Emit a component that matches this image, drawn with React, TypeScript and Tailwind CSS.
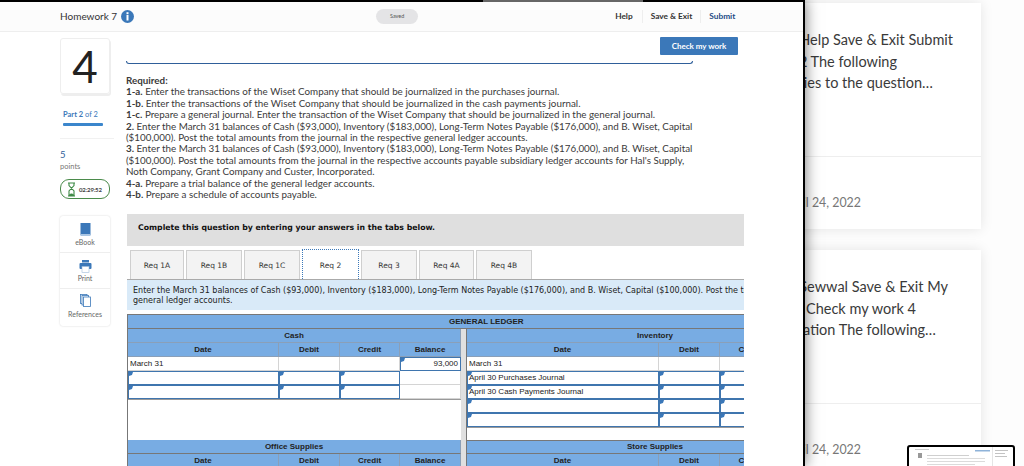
import { ReactNode } from 'react';

const tabs = [
  { label: 'Req 1A', width: 'w-[54px]' },
  { label: 'Req 1B', width: 'w-[56px]' },
  { label: 'Req 1C', width: 'w-[56px]' },
  { label: 'Req 2', width: 'w-[57px]' },
  { label: 'Req 3', width: 'w-[56px]' },
  { label: 'Req 4A', width: 'w-[55px]' },
  { label: 'Req 4B', width: 'w-[56px]' },
];

function Corner() {
  return <span className="absolute left-0 top-0 h-0 w-0 border-l-[3px] border-t-[3px] border-b-[1px] border-r-[1px] border-b-transparent border-r-transparent border-l-[#3b78b9] border-t-[#3b78b9]" />;
}

function Head({ children, strong }: { children?: ReactNode; strong?: boolean }) {
  return (
    <div className={`flex h-[14px] items-center justify-center border-b border-r border-[#8a9fb8] bg-[#78ace3] text-[8px] font-bold text-[#222] ${strong ? 'border-b-[#777]' : ''}`}>
      {children}
    </div>
  );
}

function Input({ children }: { children?: ReactNode }) {
  return (
    <div className="relative flex h-[14px] items-center border border-[#3f75ae] bg-white pl-[1px] text-[8px] text-[#222]">
      <Corner />
      {children}
    </div>
  );
}

function Plain({ children, right }: { children?: ReactNode; right?: boolean }) {
  return (
    <div className={`flex h-[14px] items-center border-b border-r border-[#d4d4d4] bg-white px-[2px] text-[8px] text-[#222] ${right ? 'justify-end' : ''}`}>
      {children}
    </div>
  );
}

function LeftLedger() {
  const cols = 'grid grid-cols-[151px_61px_60px_61px]';
  return (
    <div className="w-[333px] shrink-0">
      <Head>Cash</Head>
      <div className={cols}>
        <Head>Date</Head>
        <Head>Debit</Head>
        <Head>Credit</Head>
        <Head>Balance</Head>
      </div>
      <div className={cols}>
        <Plain>March 31</Plain>
        <Plain />
        <Plain />
        <Input>
          <span className="w-full pr-[2px] text-right">93,000</span>
        </Input>
      </div>
      <div className={cols}>
        <Input />
        <Input />
        <Input />
        <Plain />
      </div>
      <div className={cols}>
        <Input />
        <Input />
        <Input />
        <Plain />
      </div>
      <div className="h-[41px] border-t border-[#999] bg-white" />
      <Head strong>Office Supplies</Head>
      <div className={cols}>
        <Head>Date</Head>
        <Head>Debit</Head>
        <Head>Credit</Head>
        <Head>Balance</Head>
      </div>
    </div>
  );
}

function RightLedger() {
  const cols = 'grid grid-cols-[192px_61px_61px]';
  return (
    <div className="w-[315px] shrink-0 border-l border-[#777]">
      <div className="flex h-[14px] items-center border-b border-[#8a9fb8] bg-[#78ace3] pl-[170px] text-[8px] font-bold text-[#222]">Inventory</div>
      <div className={cols}>
        <Head>Date</Head>
        <Head>Debit</Head>
        <Head>Credit</Head>
      </div>
      <div className={cols}>
        <Plain>March 31</Plain>
        <Plain />
        <Plain />
      </div>
      {['April 30 Purchases Journal', 'April 30 Cash Payments Journal', '', ''].map((label, i) => (
        <div key={i} className={cols}>
          <Input>{label}</Input>
          <Input />
          <Input />
        </div>
      ))}
      <div className="h-[13px] border-t border-[#999] bg-white" />
      <div className="flex h-[14px] items-center border-y border-[#777] bg-[#78ace3] pl-[160px] text-[8px] font-bold text-[#222]">Store Supplies</div>
      <div className={cols}>
        <Head>Date</Head>
        <Head>Debit</Head>
        <Head>Credit</Head>
      </div>
    </div>
  );
}

function Rail() {
  return (
    <div className="flex w-[50px] shrink-0 flex-col pt-[6px]">
      <div className="flex h-[56px] items-center justify-center rounded-[3px] border border-[#eeeeee] text-[44px] leading-none text-[#222] shadow-[1px_2px_0_#eeeeee]">4</div>
      <div className="mt-[16px] pl-[3px] text-[7.5px] leading-[10px] text-[#3b78b9]">
        <span className="font-bold">Part 2</span> of 2
      </div>
      <div className="ml-[3px] mt-[3px] h-[3px] w-[40px] rounded-[1px] bg-[#3b86cc]" />
      <div className="mt-[12px] h-px w-[54px] bg-[#f1f1f1]" />
      <div className="mt-[10px] text-[9.5px] leading-[12px] text-[#2f5f9a]">5</div>
      <div className="text-[7.5px] leading-[11px] text-[#777]">points</div>
      <div className="mt-[7px] flex h-[20px] items-center gap-[3px] rounded-[9px] border border-[#4b8b4b] pl-[6px]">
        <svg width="9" height="15" viewBox="0 0 9 15" fill="none" stroke="#3f8a46" strokeWidth="1.1">
          <path d="M1 1h7M1 14h7M2 1v2.5L7 9v5M7 1v2.5L2 9v5" />
          <path d="M2.5 13.5c0-2 4-2 4 0z" fill="#3f8a46" />
        </svg>
        <span className="text-[6px] font-bold tracking-tight text-[#444]">02:29:52</span>
      </div>
      <div className="mt-[17px] flex w-[50px] flex-col rounded-[3px] shadow-[0_0_2px_rgba(0,0,0,0.18)]">
        <div className="flex h-[37px] flex-col items-center justify-end border-b border-[#eeeeee] pb-[5px]">
          <svg width="11" height="13" viewBox="0 0 11 13">
            <rect x="0.5" y="0" width="10" height="12" fill="#3b78b9" />
            <rect x="0.5" y="11" width="10" height="2" fill="#a9c6e4" />
          </svg>
          <span className="mt-[2px] text-[7px] leading-[9px] text-[#666]">eBook</span>
        </div>
        <div className="flex h-[36px] flex-col items-center justify-end border-b border-[#eeeeee] pb-[5px]">
          <svg width="13" height="13" viewBox="0 0 13 13">
            <rect x="3" y="0" width="7" height="2.5" fill="#3b78b9" />
            <rect x="0.5" y="3" width="12" height="6" rx="1" fill="#3b78b9" />
            <rect x="3" y="6.5" width="7" height="6" fill="#fff" stroke="#9dbbdb" strokeWidth="0.6" />
          </svg>
          <span className="mt-[1px] text-[7px] leading-[9px] text-[#666]">Print</span>
        </div>
        <div className="flex h-[37px] flex-col items-center justify-end pb-[7px]">
          <svg width="11" height="13" viewBox="0 0 11 13" fill="#fff" stroke="#3b78b9" strokeWidth="0.8">
            <rect x="0.5" y="0.5" width="6.5" height="9" />
            <rect x="2" y="1.5" width="6.5" height="9.5" />
            <rect x="3.5" y="3" width="7" height="9.5" />
          </svg>
          <span className="mt-[3px] text-[7px] leading-[9px] text-[#666]">References</span>
        </div>
      </div>
    </div>
  );
}

function Instructions() {
  return (
    <div className="mt-[11px] whitespace-nowrap text-[9.82px] leading-[11.4px] text-[#3a3a3a]">
      <div className="font-bold">Required:</div>
      <div><b>1-a.</b> Enter the transactions of the Wiset Company that should be journalized in the purchases journal.</div>
      <div><b>1-b.</b> Enter the transactions of the Wiset Company that should be journalized in the cash payments journal.</div>
      <div><b>1-c.</b> Prepare a general journal. Enter the transaction of the Wiset Company that should be journalized in the general journal.</div>
      <div>
        <b>2.</b> Enter the March 31 balances of Cash ($93,000), Inventory ($183,000), Long-Term Notes Payable ($176,000), and B. Wiset, Capital
        <br />
        ($100,000). Post the total amounts from the journal in the respective general ledger accounts.
      </div>
      <div>
        <b>3.</b> Enter the March 31 balances of Cash ($93,000), Inventory ($183,000), Long-Term Notes Payable ($176,000), and B. Wiset, Capital
        <br />
        ($100,000). Post the total amounts from the journal in the respective accounts payable subsidiary ledger accounts for Hal's Supply,
        <br />
        Noth Company, Grant Company and Custer, Incorporated.
      </div>
      <div><b>4-a.</b> Prepare a trial balance of the general ledger accounts.</div>
      <div><b>4-b.</b> Prepare a schedule of accounts payable.</div>
    </div>
  );
}

function Worksheet() {
  return (
    <div className="mt-[14px] ml-[1px] w-[617px] overflow-hidden font-['DejaVu_Sans',sans-serif]">
      <div className="flex h-[32px] items-center bg-[#dfdfdf] pb-[5px] pl-[11px] text-[7.75px] font-bold text-[#111]">
        Complete this question by entering your answers in the tabs below.
      </div>
      <div className="flex h-[34px] items-end gap-[2px] border-b border-[#aaaaaa] pl-[3px]">
        {tabs.map((t) =>
          t.label === 'Req 2' ? (
            <div key={t.label} className={`flex h-[30px] items-center justify-center border-x border-t border-dotted border-[#3b78b9] bg-white pt-[1px] text-[7.5px] text-[#333] ${t.width}`}>
              {t.label}
            </div>
          ) : (
            <div key={t.label} className={`flex h-[29px] items-center justify-center border-x border-t border-[#cfcfcf] bg-[#f3f3f3] text-[7.5px] text-[#333] ${t.width}`}>
              {t.label}
            </div>
          ),
        )}
      </div>
      <div className="flex h-[30px] items-center overflow-hidden whitespace-nowrap bg-[#d9eaf8] pl-[6px] pt-[1px] text-[8px] leading-[10px] text-[#222]">
        <div>
          Enter the March 31 balances of Cash ($93,000), Inventory ($183,000), Long-Term Notes Payable ($176,000), and B. Wiset, Capital ($100,000). Post the total
          <br />
          general ledger accounts.
        </div>
      </div>
      <div className="mt-[4px] h-[152px] overflow-hidden border-l border-t border-[#777] font-['Liberation_Sans',sans-serif]">
        <div className="flex h-[14px] items-center border-b border-[#777] bg-[#78ace3] pl-[321px] text-[8px] font-bold text-[#222]">GENERAL LEDGER</div>
        <div className="flex w-[660px]">
          <LeftLedger />
          <div className="w-[5px] shrink-0 bg-[#e0e0e0]" />
          <RightLedger />
        </div>
      </div>
    </div>
  );
}

function MainWindow() {
  return (
    <div className="absolute left-0 top-0 h-[466px] w-[805px] border-r-[2px] border-t-[2px] border-black bg-white font-['Lato',sans-serif] shadow-[0_0_14px_rgba(0,0,0,0.55)]">
      <div className="absolute left-[483px] top-[-2px] h-[2px] w-[160px] bg-[#666]" />
      <div className="relative flex h-[30px] items-center border-b border-[#eeeeee] bg-[#fcfcfc] pl-[60px]">
        <span className="text-[10px] text-[#333]">Homework 7</span>
        <svg className="ml-[4px]" width="13" height="13" viewBox="0 0 13 13">
          <circle cx="6.5" cy="6.5" r="6.5" fill="#3b78b9" />
          <rect x="5.5" y="2.2" width="2" height="2" fill="#fff" />
          <rect x="5.5" y="5" width="2" height="5.5" fill="#fff" />
        </svg>
        <div className="ml-[242px] flex h-[15px] w-[42px] items-center justify-center rounded-full bg-[#e4e4e6] text-[5.5px] text-[#555]">Saved</div>
        <div className="ml-[197px] flex items-center text-[8.3px] font-bold text-[#333]">
          <span className="pr-[9px]">Help</span>
          <span className="border-l border-[#eeeeee] px-[8px]">Save &amp; Exit</span>
          <span className="border-l border-[#eeeeee] pl-[8px] text-[#234b85]">Submit</span>
        </div>
      </div>
      <div className="flex pl-[60px]">
        <Rail />
        <div className="ml-[16px] flex flex-col">
          <div className="flex w-[612px] justify-end pt-[5px]">
            <div className="flex h-[18px] w-[78px] items-center justify-center rounded-[1px] bg-[#3b78b9] text-[8px] font-bold text-white">Check my work</div>
          </div>
          <div className="mt-[6px] h-[3px] w-[567px] rounded-b-[3px] border-x border-b border-[#2f5f9a]" />
          <Instructions />
          <Worksheet />
        </div>
      </div>
    </div>
  );
}

function Thumbnail() {
  return (
    <div className="absolute left-[907px] top-[445px] h-[24px] w-[108px] rounded-[3px] border-[2px] border-black bg-white">
      <svg width="104" height="20" viewBox="0 0 104 20">
        <rect x="6" y="2" width="14" height="0.6" fill="#aaa" />
        <rect x="66" y="3" width="15" height="1.5" fill="#8fb3d9" />
        <rect x="83" y="0" width="1" height="20" fill="#e5e5e5" />
        <rect x="86" y="3" width="13" height="0.7" fill="#aaa" />
        <rect x="86" y="6" width="10" height="0.7" fill="#aaa" />
        <rect x="86" y="9" width="12" height="0.7" fill="#aaa" />
        <rect x="9" y="6" width="4" height="5" fill="#999" />
        <rect x="18" y="8" width="42" height="0.7" fill="#bbb" />
        <rect x="18" y="11" width="58" height="0.7" fill="#ccc" />
        <rect x="18" y="14" width="58" height="0.7" fill="#ccc" />
        <rect x="18" y="17" width="48" height="0.7" fill="#ccc" />
      </svg>
    </div>
  );
}

function ArticleCard({ lines, tall }: { lines: [string, string][]; tall?: boolean }) {
  return (
    <div className={`flex w-[481px] flex-col bg-white font-['Lato',sans-serif] shadow-[0_0_12px_rgba(0,0,0,0.1)] ${tall ? 'h-[226px]' : 'h-[240px]'}`}>
      <div className="h-[154px] border-b border-[#eeeeee] pt-[26px]">
        {lines.map(([text, pad]) => (
          <div key={text} className={`whitespace-nowrap text-right text-[14.5px] leading-[21.5px] text-[#3a3a3a] ${pad}`}>
            {text}
          </div>
        ))}
      </div>
      <div className="mr-[120px] pt-[38px] text-right text-[12.4px] leading-[16px] text-[#777]">April 24, 2022</div>
    </div>
  );
}

export default function App() {
  return (
    <div className="relative h-[466px] w-[1024px] overflow-hidden bg-[#fdfdfd]">
      <div className="flex flex-col gap-[21px] pl-[500px] pt-[3px]">
        <ArticleCard
          tall
          lines={[
            ['Help Save & Exit Submit', 'pr-[28px]'],
            ['2 The following', 'pr-[84px]'],
            ['applies to the question…', 'pr-[48px]'],
          ]}
        />
        <ArticleCard
          lines={[
            ['Sewwal Save & Exit My', 'pr-[33px]'],
            ['Check my work 4', 'pr-[65px]'],
            ['information The following…', 'pr-[45px]'],
          ]}
        />
      </div>
      <MainWindow />
      <Thumbnail />
    </div>
  );
}
